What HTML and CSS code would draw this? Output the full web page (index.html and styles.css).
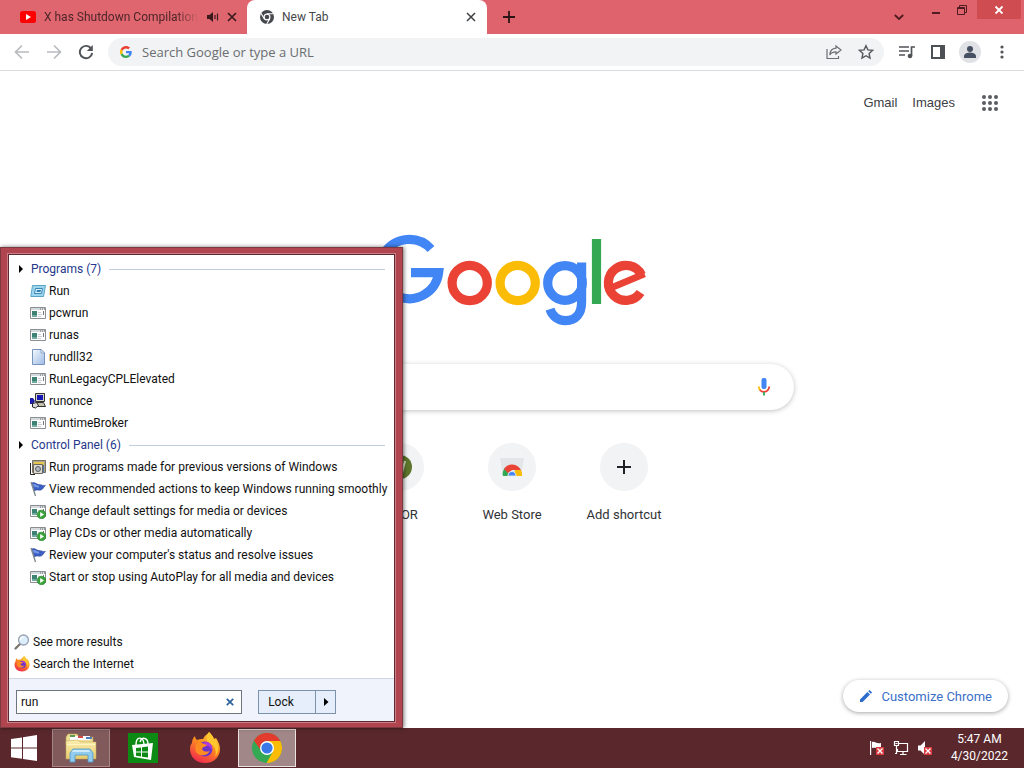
FILE: index.html
```html
<!DOCTYPE html>
<html lang="en">
<head>
<meta charset="utf-8">
<title>New Tab</title>
<link rel="stylesheet" href="styles.css">
</head>
<body>
<svg class="defs" aria-hidden="true">
  <defs>
    <linearGradient id="ff" x1="0.8" y1="0" x2="0.3" y2="1"><stop offset="0" stop-color="#ffdc3e"/><stop offset=".45" stop-color="#ff8a1e"/><stop offset="1" stop-color="#f0294e"/></linearGradient>
    <linearGradient id="dll" x1="0" y1="0" x2="1" y2="1"><stop offset="0" stop-color="#f4f9ff"/><stop offset="1" stop-color="#9dbbe4"/></linearGradient>
    <linearGradient id="folder" x1="0" y1="0" x2="0" y2="1"><stop offset="0" stop-color="#fbeeb0"/><stop offset="1" stop-color="#e8cb6c"/></linearGradient>
    <symbol id="i-app" viewBox="0 0 16 16"><path fill="#fdfdfd" stroke="#8b8f92" d="M.5 2.500h15v11H.5z"/><path fill="#d5dade" d="M1 3h14v2H1z"/><path fill="#666" d="M10 3.500h1v1h-1zM12 3.500h1v1h-1zM14 3.500h1v1h-1z"/><path fill="#3d8272" d="M2 6h5v6H2z"/><path fill="#72a9a0" d="M2 10h5v2H2z"/><path stroke="#c9ced2" d="M8 7.500h3M8 9.500h4M8 11.500h3"/><path stroke="#777" d="M13.500 6v4"/></symbol>
    <symbol id="i-play" viewBox="0 0 16 16"><use href="#i-app"/><circle cx="11.500" cy="11.500" r="4.300" fill="#3aa43a" stroke="#217b28" stroke-width=".6"/><path fill="#fff" d="M10.200 9l3.800 2.500-3.800 2.500z"/></symbol>
    <symbol id="i-flag" viewBox="0 0 16 16"><path fill="#3b5fc4" stroke="#2b3f8d" stroke-width=".5" d="M2 2C5 .5 7 4 9.500 3.500 11.500 4 13 4.500 15.500 4.500 13.500 6 13 8.500 11 9 8.500 10 6.500 8 4.500 10z"/><path fill="#7698e8" d="M3 3.200c2.500-1 4 1.600 6 1.600L9 6.500C7 6.800 5.500 5 4 6z"/><path stroke="#7c858e" stroke-width="1.300" d="M1 1l4.500 14"/></symbol>
    <symbol id="i-firefox" viewBox="0 0 32 32"><path fill="url(#ff)" d="M3 11c0-3 1-5 3-7 0 2 1 3 2 4 2-1 4-1 6-1 2-4 5-5 6-7 2 2 4 4 5 7l2-1c2 3 4 7 4 11 0 8-6 14-15 14S1 25 1 17c0-3 1-5 2-6z"/><path fill="#ffc62e" d="M20 0c2 2 4 4 5 7 5 4 6 12 1 18 2-6 0-12-6-14-3-2-3-6 0-11z"/><circle cx="16" cy="17" r="7.500" fill="#6c35c9"/><path fill="#b03ad8" d="M15 10c5-1 9 3 8 8-1-3-4-5-8-4z"/><path fill="#ff8c22" d="M7 13c2-3 5-3 8-1l3 1c-1 2-4 1-5 4 1 3 5 3 8 2-3 5-10 6-14 1-1-2-1-5 0-7z"/></symbol>
    <symbol id="i-goog" viewBox="0 0 48 48"><path fill="#ea4335" d="M24 9.500c3.500 0 6.700 1.200 9.200 3.600l6.900-6.900C35.900 2.400 30.500 0 24 0 14.600 0 6.500 5.400 2.600 13.200l8 6.200C12.400 13.700 17.700 9.500 24 9.500z"/><path fill="#4285f4" d="M47 24.600c0-1.600-.2-3.100-.4-4.600H24v9h12.900c-.6 3-2.300 5.500-4.800 7.200l7.700 6C44.400 38 47 32 47 24.600z"/><path fill="#fbbc05" d="M10.500 28.600a14.500 14.500 0 0 1 0-9.200l-8-6.200a24 24 0 0 0 0 21.600z"/><path fill="#34a853" d="M24 48c6.500 0 11.900-2.100 15.900-5.800l-7.700-6c-2.200 1.500-4.900 2.300-8.200 2.300-6.300 0-11.600-4.200-13.500-9.900l-8 6.200C6.500 42.600 14.600 48 24 48z"/></symbol>
    <symbol id="i-err" viewBox="0 0 8 8"><path fill="#d9393c" d="M0 0h8v8H0z"/><path stroke="#fff" stroke-width="1.400" d="M1.500 1.500l5 5M6.500 1.500l-5 5"/></symbol>
  </defs>
</svg>

<div class="browser">
  <header class="tabstrip">
    <div class="tab tab-muted">
      <svg class="s16" viewBox="0 0 16 16"><rect y="2" width="16" height="12" rx="2.500" fill="#f00"/><path fill="#fff" d="M6 5l5 3-5 3z"/></svg>
      <span class="tab-title tab-fade">X has Shutdown Compilation</span>
      <svg class="s12" viewBox="0 0 12 12" fill="none" stroke="#3a1a1d" stroke-width="1.200"><path fill="#3a1a1d" stroke="none" d="M0 4h2.500L6 1v10L2.500 8H0z"/><path d="M8 4v4M10.500 2.500v7"/></svg>
      <button class="plain" aria-label="Close tab"><svg class="s10" viewBox="0 0 10 10" stroke="#3a1a1d" stroke-width="1.700"><path d="M1 1l8 8M9 1L1 9"/></svg></button>
    </div>
    <div class="tab tab-active">
      <svg class="s14" viewBox="0 0 14 14"><circle cx="7" cy="7" r="7" fill="#45484c"/><circle cx="7" cy="7" r="2.900" fill="#45484c" stroke="#fff" stroke-width="1.200"/><path stroke="#fff" stroke-width="1.100" d="M7 3.700h6.500M4.200 8.700L1 3.200M9.800 8.700L6.700 14"/></svg>
      <span class="tab-title">New Tab</span>
      <button class="plain" aria-label="Close tab"><svg class="s10" viewBox="0 0 10 10" stroke="#3c4043" stroke-width="1.500"><path d="M1 1l8 8M9 1L1 9"/></svg></button>
    </div>
    <button class="plain newtab" aria-label="New tab"><svg class="s12" viewBox="0 0 12 12" stroke="#2a1416" stroke-width="1.800"><path d="M6 0v12M0 6h12"/></svg></button>
    <div class="winctl">
      <button class="plain chev" aria-label="Search tabs"><svg class="s10" viewBox="0 0 10 10" fill="none" stroke="#4d1b20" stroke-width="1.800"><path d="M.8 3L5 7l4.200-4"/></svg></button>
      <button class="plain ctl" aria-label="Minimize"><svg class="s10" viewBox="0 0 10 10" stroke="#4d1b20" stroke-width="2"><path d="M1 8h8"/></svg></button>
      <button class="plain ctl" aria-label="Restore"><svg class="s10" viewBox="0 0 10 10" fill="none" stroke="#4d1b20"><path d="M.5 2.500h7v7h-7zM.5 3.500h7M2.500 2V.5h7v7H8"/></svg></button>
      <button class="plain close" aria-label="Close"><svg class="s10" viewBox="0 0 10 10" stroke="#fff" stroke-width="1.800"><path d="M1.500 1.500l7 7M8.500 1.500l-7 7"/></svg></button>
    </div>
  </header>

  <nav class="toolbar">
    <button class="plain" aria-label="Back"><svg class="s16" viewBox="0 0 16 16" fill="none" stroke="#b9bbbe" stroke-width="1.700"><path d="M15 8H2M8 1.500L1.500 8 8 14.500"/></svg></button>
    <button class="plain" aria-label="Forward"><svg class="s16" viewBox="0 0 16 16" fill="none" stroke="#b9bbbe" stroke-width="1.700"><path d="M1 8h13M8 1.500L14.500 8 8 14.500"/></svg></button>
    <button class="plain" aria-label="Reload"><svg class="s16" viewBox="0 0 16 16" fill="none" stroke="#505357" stroke-width="1.900"><path d="M13.200 4.600A6.200 6.200 0 1 0 14.200 9"/><path fill="#505357" stroke="none" d="M14.800 1v6h-6z"/></svg></button>
    <div class="omnibox">
      <svg class="s12" viewBox="0 0 48 48"><use href="#i-goog"/></svg>
      <input class="url" type="text" aria-label="Address" placeholder="Search Google or type a URL">
      <button class="plain" aria-label="Share"><svg class="s16" viewBox="0 0 16 16" fill="none" stroke="#6b6e72" stroke-width="1.200"><path d="M1 5v9.500h11.500V12M10 2l5 4-5 4V7.800C7 7.800 5 8.500 3.800 11 4 7 6 4.500 10 4.200z"/></svg></button>
      <button class="plain" aria-label="Bookmark"><svg class="s16" viewBox="0 0 16 16" fill="none" stroke="#55585c" stroke-width="1.400"><path d="M8 1.700l1.900 4.200 4.600.5-3.400 3.100.9 4.500-4-2.300-4 2.300.9-4.500-3.400-3.100 4.600-.5z"/></svg></button>
    </div>
    <button class="plain" aria-label="Media"><svg class="s16" viewBox="0 0 16 16" fill="none" stroke="#505357" stroke-width="1.700"><path d="M0 3h10M0 7h10M0 11h6M12.500 12V3H16"/><circle cx="11" cy="12" r="2.300" fill="#505357" stroke="none"/></svg></button>
    <button class="plain" aria-label="Side panel"><svg class="s14" viewBox="0 0 14 14"><path fill="#4d5054" d="M0 0h14v14H0z"/><path fill="#fff" d="M2 2h7v10H2z"/></svg></button>
    <button class="plain avatar" aria-label="Profile"><svg class="s22" viewBox="0 0 22 22"><circle cx="11" cy="11" r="11" fill="#dfe1e5"/><circle cx="11" cy="8" r="3" fill="#465062"/><path fill="#465062" d="M5 17v-2c0-2.500 4-3.500 6-3.500s6 1 6 3.500v2z"/></svg></button>
    <button class="plain" aria-label="Menu"><svg class="s14" viewBox="0 0 14 14" fill="#505357"><circle cx="7" cy="2" r="1.600"/><circle cx="7" cy="7" r="1.600"/><circle cx="7" cy="12" r="1.600"/></svg></button>
  </nav>

  <main class="ntp">
    <div class="links">
      <a href="#">Gmail</a>
      <a href="#">Images</a>
      <button class="plain" aria-label="Google apps"><svg class="s16" viewBox="0 0 16 16" fill="#5a5d61"><circle cx="2" cy="2" r="2"/><circle cx="8" cy="2" r="2"/><circle cx="14" cy="2" r="2"/><circle cx="2" cy="8" r="2"/><circle cx="8" cy="8" r="2"/><circle cx="14" cy="8" r="2"/><circle cx="2" cy="14" r="2"/><circle cx="8" cy="14" r="2"/><circle cx="14" cy="14" r="2"/></svg></button>
    </div>
    <svg class="logo" viewBox="0 0 272 92" fill="none" stroke-width="9.200" role="img" aria-label="Google">
      <path stroke="#4285f4" d="M55 15A29.600 29.600 0 1 0 62.600 38.700H35"/>
      <circle cx="93.700" cy="49" r="17.600" stroke="#ea4335"/>
      <circle cx="141.700" cy="49" r="17.600" stroke="#fbbc05"/>
      <path stroke="#4285f4" d="M205.600 28.500V68c0 12-6 18.600-16 18.600-8 0-13.600-5-15.600-11.400"/>
      <circle cx="189" cy="49" r="17.300" stroke="#4285f4"/>
      <path stroke="#34a853" d="M220.500 5v65"/>
      <path stroke="#ea4335" d="M265.500 41A17.500 17.500 0 1 0 264.500 58.500"/>
      <path stroke="#ea4335" stroke-width="6.800" d="M235 53.800l33.500-13.900"/>
    </svg>
    <div class="searchbox">
      <input type="text" aria-label="Search Google">
      <svg class="s20" viewBox="0 0 20 20" fill="none" stroke-width="1.800"><rect x="7.500" y="1" width="5" height="11" rx="2" fill="#4285f4"/><path stroke="#fbbc05" d="M4.800 9.500c0 1.700.6 3 1.600 3.900"/><path stroke="#ea4335" d="M6 13c2 2.600 6.500 2.500 8.300-.5.600-.9.900-1.900.9-3"/><path stroke="#34a853" d="M10 15v3.500"/></svg>
    </div>
    <div class="shortcuts">
      <a class="tile" href="#"><span class="disc"><svg class="s24" viewBox="0 0 24 24"><circle cx="12" cy="12" r="12" fill="#5d762c"/><path fill="none" stroke="#dfe6c8" stroke-width="2" d="M10 6l4 12 3-12"/></svg></span><span>V TOR</span></a>
      <a class="tile" href="#"><span class="disc"><svg class="s24" viewBox="0 0 24 24"><path fill="#e3e6e8" d="M0 3h24l-3 18H3z"/><path fill="#34a853" d="M3 21c-1-3 0-6 2-8l5 8z"/><path fill="#fbbc05" d="M14 21l1-6h6c1 2 1 4 1 6z"/><path fill="#ea4335" d="M4 14c3-6 13-6 17 1H12l-4 3z"/><path fill="#4285f4" stroke="#e3e6e8" d="M8 21c0-6 8-6 8 0z"/></svg></span><span>Web Store</span></a>
      <a class="tile" href="#"><span class="disc"><svg class="s14" viewBox="0 0 14 14" stroke="#202124" stroke-width="2"><path d="M7 0v14M0 7h14"/></svg></span><span>Add shortcut</span></a>
    </div>
    <button class="customize"><svg class="s14" viewBox="0 0 14 14" fill="#2d6bcc"><path d="M1 13v-2.600L8.400 3 11 5.600 3.600 13zM9.200 2.200l1.300-1.300 2.600 2.600-1.300 1.300z"/></svg>Customize Chrome</button>
  </main>
</div>

<section class="start" aria-label="Start menu">
  <div class="panel">
    <div class="results">
      <h2 class="group">Programs (7)</h2>
      <ul>
        <li><svg class="s16" viewBox="0 0 16 16"><path fill="#9bd6ee" stroke="#5aa3c6" d="M2.500 2.500h13l-2 11H.8z"/><path fill="#d9f2fc" stroke="#3b86b3" d="M5.500 5.500h7l-1 5h-7z"/><path fill="#2f7fb5" d="M7 7h4l-.5 2h-4z"/></svg>Run</li>
        <li><svg class="s16"><use href="#i-app"/></svg>pcwrun</li>
        <li><svg class="s16"><use href="#i-app"/></svg>runas</li>
        <li><svg class="s16" viewBox="0 0 16 16"><path fill="url(#dll)" stroke="#7794bd" d="M2.500.5h8.500l3.500 3.500v11.500h-12z"/><path fill="#fff" stroke="#7794bd" stroke-width=".8" d="M11 .5V4h3.500z"/></svg>rundll32</li>
        <li><svg class="s16"><use href="#i-app"/></svg>RunLegacyCPLElevated</li>
        <li><svg class="s16" viewBox="0 0 16 16"><path fill="#d6d2c4" stroke="#333" d="M5.500.5h9v8h-9z"/><path fill="#1616b4" d="M7 2h6v5H7z"/><path fill="#c5c1ad" stroke="#333" d="M6.500 9.500h7l2 4h-8z"/><path fill="#1c1ca8" d="M0 5h3l2 3-2 3H0z"/><path fill="#ddd" stroke="#222" d="M2.500 10.500l4-1 2 3-3 2.500-3-1z"/></svg>runonce</li>
        <li><svg class="s16"><use href="#i-app"/></svg>RuntimeBroker</li>
      </ul>
      <h2 class="group">Control Panel (6)</h2>
      <ul>
        <li><svg class="s16" viewBox="0 0 16 16"><path fill="#aaa493" stroke="#77705f" d="M2.500 1.500h13v12h-13z"/><path fill="#e6c64c" d="M4 3h10v3H4z"/><path fill="#dedbd0" stroke="#6b675e" d="M3.500 5.500h9v9h-9z"/><circle cx="8" cy="10" r="2.500" fill="#b2b5bb" stroke="#5b6068"/><path fill="none" stroke="#222" d="M.5 4v11.500H5"/><path stroke="#4c73a4" d="M13.500 6v8"/></svg>Run programs made for previous versions of Windows</li>
        <li><svg class="s16"><use href="#i-flag"/></svg>View recommended actions to keep Windows running smoothly</li>
        <li><svg class="s16"><use href="#i-play"/></svg>Change default settings for media or devices</li>
        <li><svg class="s16"><use href="#i-play"/></svg>Play CDs or other media automatically</li>
        <li><svg class="s16"><use href="#i-flag"/></svg>Review your computer's status and resolve issues</li>
        <li><svg class="s16"><use href="#i-play"/></svg>Start or stop using AutoPlay for all media and devices</li>
      </ul>
    </div>
    <ul class="more">
      <li><svg class="s16" viewBox="0 0 16 16"><path stroke="#7a7168" stroke-width="2.200" stroke-linecap="round" d="M1.500 14.500L6 10"/><circle cx="9.500" cy="6" r="5" fill="#dcedfb" stroke="#97a3b3" stroke-width="1.300"/><path fill="none" stroke="#fff" stroke-width="1.300" d="M6.500 6c0-2 1.500-3 3-3"/></svg>See more results</li>
      <li><svg class="s16"><use href="#i-firefox"/></svg>Search the Internet</li>
    </ul>
    <div class="foot">
      <div class="field">
        <input type="text" value="run" aria-label="Search programs and files">
        <button class="plain" aria-label="Clear"><svg class="s8" viewBox="0 0 8 8" stroke="#2a639c" stroke-width="1.700"><path d="M.8.8l6.400 6.400M7.200.8L.8 7.200"/></svg></button>
      </div>
      <div class="lock"><button>Lock</button><button class="arrow" aria-label="Power options"><svg class="s8" viewBox="0 0 8 8"><path d="M2 0l4.500 4L2 8z"/></svg></button></div>
    </div>
  </div>
</section>

<footer class="taskbar">
  <button class="task" aria-label="Start"><svg class="s26" viewBox="0 0 26 26" fill="#fff"><path d="M0 4l11-1.600V12.500H0zM12 2.200L26 0v12.500H12zM0 13.500h11v10.300L0 22.200zM12 13.500h14V26l-14-2z"/></svg></button>
  <button class="task running" aria-label="File Explorer"><svg class="s32" viewBox="0 0 32 32"><path fill="#eedd94" stroke="#b69b4b" stroke-width=".6" d="M1 5l2-3h9l2 3h14v8H1z"/><path fill="#fff" d="M5 4h20v4H5z"/><path fill="#5b9a55" d="M5 3h5v2H5z"/><path fill="#d34b40" d="M13 4h5v2h-5z"/><path fill="#4b7ebd" d="M21 5h6v2h-6z"/><path fill="url(#folder)" stroke="#c2a454" stroke-width=".5" d="M1 9l12-1 2 2h16v17H1z"/><path fill="#fff4c2" d="M2 12h28v1H2z"/><path fill="#91cbee" stroke="#4f97c8" stroke-width=".8" d="M5 30v-9l3-4h17l3 4v9h-5v-7H10v7z"/><path fill="#cdeafa" d="M8 18h16l1 2H7z"/></svg></button>
  <button class="task" aria-label="Store"><svg class="s30" viewBox="0 0 30 30"><path fill="#0c8a13" d="M0 0h30v30H0z"/><path fill="none" stroke="#fff" stroke-width="1.400" d="M8 12c0-9 7-9 8-1M12 9c2-6 8-4 8 2"/><path fill="#fff" d="M4 12l21-2-2 17-17-3z"/><path fill="#0c8a13" d="M8 15l5-.6v4.100H8zM14 14.300l6-.8v5h-6zM8 19.500h5v4l-5-.7zM14 19.500h6v5l-6-.8z"/></svg></button>
  <button class="task" aria-label="Firefox"><svg class="s32"><use href="#i-firefox"/></svg></button>
  <button class="task current" aria-label="Chrome"><svg class="s30" viewBox="0 0 30 30"><circle cx="15" cy="15" r="15" fill="#34a853"/><path fill="#fbbc05" d="M15 8h13.300A15 15 0 0 1 14.500 30L21 18.500z"/><path fill="#e33b2e" d="M2 7.500A15 15 0 0 1 28.300 8H15a7 7 0 0 0-6.500 9z"/><circle cx="15" cy="15" r="7" fill="#fff"/><circle cx="15" cy="15" r="5.600" fill="#3b78e7"/></svg></button>
  <div class="tray">
    <svg class="s16" viewBox="0 0 16 16"><path stroke="#fff" stroke-width="1.200" d="M1.600 1v14"/><path fill="#fff" d="M3 2c3-1 4 2 9 1v5c-4 1-6-1-9 0z"/><use href="#i-err" x="7" y="7" width="8" height="8"/></svg>
    <svg class="s16" viewBox="0 0 16 16" fill="none" stroke="#fff" stroke-width="1.200"><path d="M6 3.500h8.500v8H4.500V9M10 12v2.500M7 14.500h6.500M1.500 1.500h4v4h-4zM3.500 6v7.500H2M2.500 3.500h2"/></svg>
    <svg class="s16" viewBox="0 0 16 16"><path fill="#fff" d="M1 5.500h2.500L8 1v14l-4.500-4.500H1z"/><use href="#i-err" x="7" y="7" width="8" height="8"/></svg>
  </div>
  <div class="clock"><span>5:47 AM</span><span>4/30/2022</span></div>
</footer>
</body>
</html>
```
FILE: styles.css
```css
* { box-sizing: border-box; }
body {
  margin: 0;
  min-height: 100vh;
  display: flex;
  flex-direction: column;
  position: relative;
  background: #fff;
  font-family: "Segoe UI", Roboto, sans-serif;
  font-size: 12px;
  color: #111;
}
svg { display: block; flex: none; }
button, input { font: inherit; color: inherit; }
ul { list-style: none; margin: 0; padding: 0; }
.defs { position: absolute; width: 0; height: 0; }
.s8 { width: 8px; height: 8px; }
.s10 { width: 10px; height: 10px; }
.s12 { width: 12px; height: 12px; }
.s14 { width: 14px; height: 14px; }
.s16 { width: 16px; height: 16px; }
.s20 { width: 20px; height: 20px; }
.s22 { width: 22px; height: 22px; }
.s24 { width: 24px; height: 24px; }
.s26 { width: 26px; height: 26px; }
.s30 { width: 30px; height: 30px; }
.s32 { width: 32px; height: 32px; }
.plain {
  border: 0;
  padding: 0;
  background: none;
  display: flex;
  align-items: center;
  justify-content: center;
  flex: none;
}

.browser { flex: 1; display: flex; flex-direction: column; }

.tabstrip { display: flex; height: 34px; background: #de636d; }
.tab { display: flex; align-items: center; gap: 8px; height: 34px; }
.tab-muted { width: 247px; padding: 0 10px 0 20px; color: #4d2529; background: linear-gradient(to right, #df666f 90%, #fff 90%); }
.tab-muted { background: #df666f; border-radius: 0 0 8px 0; }
.tab-active { width: 240px; padding: 0 11px 0 13px; background: #fff; border-radius: 8px 8px 0 0; color: #45484c; }
.tab-title { flex: 1; min-width: 0; overflow: hidden; white-space: nowrap; }
.tab-fade { mask-image: linear-gradient(to right, #000 85%, transparent); }
.newtab { width: 44px; }
.winctl { display: flex; align-items: flex-start; margin-left: auto; }
.chev { width: 36px; height: 34px; margin-right: 6px; }
.ctl { width: 26px; height: 19px; }
.close { width: 44px; height: 19px; margin-left: 2px; margin-right: 3px; background: #cf4c50; }

.toolbar {
  display: flex;
  align-items: center;
  gap: 16px;
  height: 37px;
  padding: 0 15px 0 14px;
  border-bottom: 1px solid #dadce0;
  background: #fff;
}
.omnibox {
  flex: 1;
  min-width: 0;
  display: flex;
  align-items: center;
  gap: 16px;
  height: 28px;
  padding: 0 10px 0 12px;
  margin: 0 -1px 0 -2px;
  border-radius: 14px;
  background: #f1f3f4;
}
.url {
  flex: 1;
  min-width: 0;
  margin-left: -6px;
  padding: 0;
  border: 0;
  background: none;
  font-family: "Open Sans", "Noto Sans", sans-serif;
  font-size: 13px;
}
.url::placeholder { color: #6a6d71; opacity: 1; }
.avatar { margin: 0 -2px; }

.ntp { flex: 1; display: flex; flex-direction: column; align-items: center; padding-bottom: 16px; }
.links {
  align-self: flex-end;
  display: flex;
  align-items: center;
  gap: 15px;
  height: 63px;
  padding-right: 26px;
  font-family: "Liberation Sans", Arial, sans-serif;
  font-size: 13px;
}
.links a { color: #3c4043; text-decoration: none; }
.links button { margin-left: 12px; }
.logo { width: 272px; height: 92px; margin-top: 100px; }
.searchbox {
  display: flex;
  align-items: center;
  width: 100%;
  max-width: 563px;
  height: 46px;
  margin-top: 38px;
  padding: 0 20px;
  border-radius: 23px;
  background: #fff;
  box-shadow: 0 1px 5px rgba(32, 33, 36, .28);
}
.searchbox input { flex: 1; border: 0; background: none; }
.shortcuts {
  display: flex;
  margin-top: 33px;
  font-size: 13px;
}
.tile { width: 112px; display: flex; flex-direction: column; align-items: center; gap: 16px; color: #303336; text-decoration: none; }
.disc { width: 48px; height: 48px; border-radius: 50%; background: #f1f3f4; display: flex; align-items: center; justify-content: center; }
.customize {
  display: flex;
  align-items: center;
  gap: 8px;
  align-self: flex-end;
  height: 32px;
  margin: auto 16px 0 0;
  padding: 0 16px;
  border: 0;
  border-radius: 16px;
  background: #fff;
  box-shadow: 0 1px 4px rgba(32, 33, 36, .4);
  color: #3c70c8;
  font-size: 13px;
}

.start {
  position: absolute;
  left: 0;
  bottom: 40px;
  width: 403px;
  padding: 6px 7px 5px;
  border: 1px solid #7c3940;
  background: #b0454f;
  box-shadow: 1px 0 4px rgba(0, 0, 0, .55);
}
.panel { border: 1px solid #5e2830; outline: 1px solid #c98087; background: #fff; }
.results { padding: 3px 0 43px 10px; }
.group {
  display: flex;
  align-items: center;
  height: 22px;
  margin: 0;
  padding-right: 9px;
  font-size: 12px;
  font-weight: 400;
  color: #25378b;
}
.group::before { content: ""; width: 0; margin-right: 8px; border: 4px solid transparent; border-left: 4px solid #000; border-right: 0; }
.group::after { content: ""; flex: 1; height: 1px; margin-left: 8px; background: #c2cddd; }
.start li { display: flex; align-items: center; gap: 3px; height: 22px; white-space: nowrap; }
.results li { padding-left: 11px; }
.more { padding: 0 0 3px 5px; }
.foot {
  display: flex;
  align-items: center;
  gap: 16px;
  height: 43px;
  padding: 3px 7px 0;
  border-top: 1px solid #cdd6e2;
  background: #f0f3fb;
}
.field { display: flex; align-items: center; width: 226px; height: 24px; padding: 0 7px 0 4px; border: 1px solid #6d7680; background: #fff; }
.field input { flex: 1; min-width: 0; padding: 0; border: 0; outline: 0; }
.lock { display: flex; height: 24px; border: 1px solid #7a93ab; background: #e5eefa; }
.lock button { width: 56px; padding: 0 12px 0 0; border: 0; background: none; }
.lock .arrow { width: 20px; padding: 0; border-left: 1px solid #7a93ab; display: flex; align-items: center; justify-content: center; }

.taskbar { display: flex; align-items: center; gap: 4px; height: 40px; padding-right: 16px; background: #5a282c; color: #fff; }
.task { display: flex; align-items: center; justify-content: center; width: 58px; height: 38px; padding: 0; border: 1px solid transparent; background: none; }
.task:first-child { width: 48px; }
.running { border-color: #a58587; background: #815a5c; }
.current { border-color: #ece2e2; background: #a28788; }
.tray { display: flex; gap: 8px; margin-left: auto; }
.clock { display: flex; flex-direction: column; align-items: center; margin-left: 14px; line-height: 17px; }
```
